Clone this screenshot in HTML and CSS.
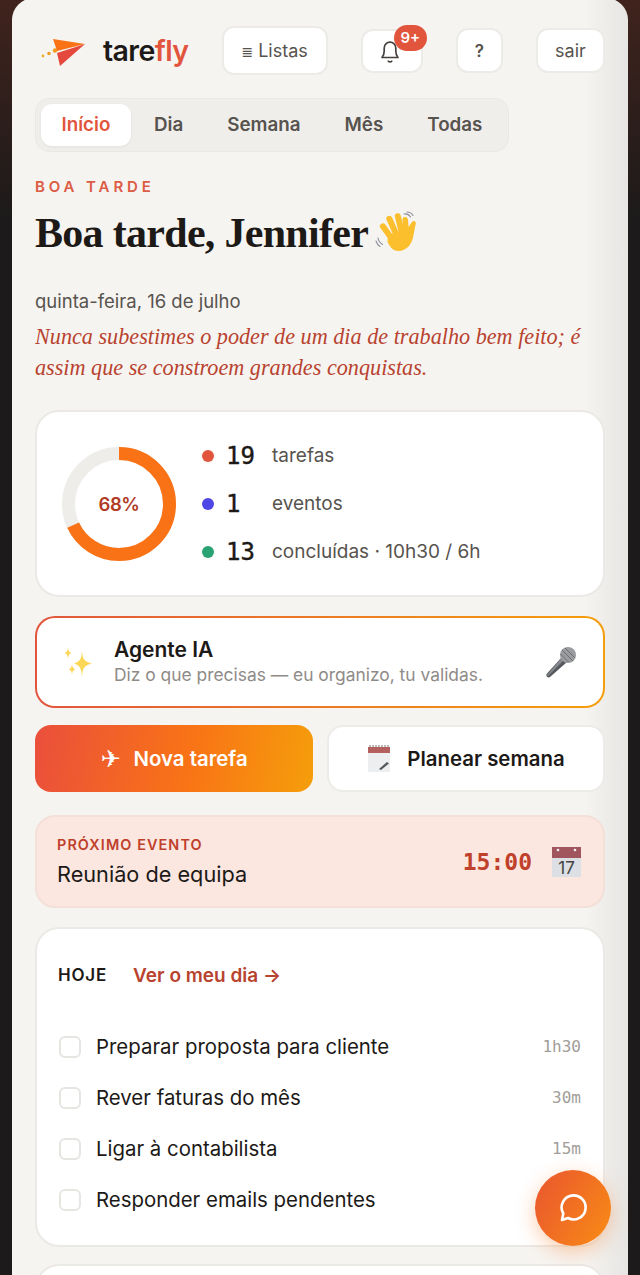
FILE: index.html
```html
<!DOCTYPE html>
<html lang="pt">
<head>
    <meta charset="UTF-8">
    <meta name="viewport" content="width=device-width, initial-scale=1.0">
    <title>tarefly</title>
    <link rel="stylesheet" href="styles.css">
</head>
<body>
    <main class="panel">
        <header class="topbar">
            <div class="brand">
                <svg class="brand-mark" viewBox="0 0 48 32" aria-hidden="true">
                    <circle cx="3" cy="21" r="1.4" fill="#eeb02f"/>
                    <circle cx="9" cy="18.5" r="1.8" fill="#ee9f2a"/>
                    <circle cx="15" cy="15.5" r="2.2" fill="#f39a1f"/>
                    <polygon points="13,4 45,9 17,16" fill="#f97316"/>
                    <polygon points="45,9 20,31 17,18" fill="#e5493d"/>
                </svg>
                <span class="brand-name">tare<em>fly</em></span>
            </div>
            <button class="top-btn top-btn-lists"><span class="lists-glyph">≣</span> Listas</button>
            <button class="top-btn top-btn-bell">
                <svg class="bell" viewBox="0 0 24 26" aria-hidden="true">
                    <path d="M4 19.5c1.6-1.6 2.2-3 2.2-6.5V10a5.8 5.8 0 0 1 11.6 0v3c0 3.500.6 4.900 2.200 6.500z" fill="none" stroke="#45413e" stroke-width="1.700" stroke-linejoin="round"/>
                    <path d="M10.300 23.200c.9 1 2.500 1 3.400 0" fill="none" stroke="#45413e" stroke-width="1.700" stroke-linecap="round"/>
                </svg>
                <span class="badge">9+</span>
            </button>
            <button class="top-btn top-btn-help">?</button>
            <button class="top-btn top-btn-out">sair</button>
        </header>

        <nav class="tabs">
            <a class="tab active">Início</a>
            <a class="tab">Dia</a>
            <a class="tab">Semana</a>
            <a class="tab">Mês</a>
            <a class="tab">Todas</a>
        </nav>

        <p class="eyebrow">BOA TARDE</p>
        <h1 class="greeting">
            Boa tarde, Jennifer
            <svg class="wave" viewBox="0 0 44 44" aria-hidden="true">
                <g fill="#fbbf2d">
                    <rect x="9" y="11" width="6" height="21" rx="3" transform="rotate(-36 12 21)"/>
                    <rect x="15" y="4" width="6" height="24" rx="3" transform="rotate(-24 18 16)"/>
                    <rect x="22" y="2" width="6" height="24" rx="3" transform="rotate(-14 25 14)"/>
                    <rect x="28" y="6" width="5.500" height="21" rx="2.700" transform="rotate(-4 31 16)"/>
                    <path d="M13 24l19-6 5-7c2-2 4.500-.5 3.700 2l-2.200 11c-1 9-7 16-15 16-6 0-9-5-11-9z"/>
                </g>
                <path d="M29 3c3-.5 5 .5 6.500 3M32 1c2.500 0 4.500 1 6 3.500M3 27c.5 3 2 5 4.500 6.500M1 30c.8 2.500 2 4.200 4 5.500" fill="none" stroke="#8b8f9c" stroke-width="1.100" stroke-linecap="round"/>
            </svg>
        </h1>
        <p class="date">quinta-feira, 16 de julho</p>
        <p class="quote">Nunca subestimes o poder de um dia de trabalho bem feito; é assim que se constroem grandes conquistas.</p>

        <section class="card summary">
            <div class="donut">
                <svg viewBox="0 0 114 114" aria-hidden="true">
                    <circle cx="57" cy="57" r="50.500" fill="none" stroke="#efede9" stroke-width="13"/>
                    <circle cx="57" cy="57" r="50.500" fill="none" stroke="#f97316" stroke-width="13" stroke-dasharray="215.800 317.300" transform="rotate(-90 57 57)"/>
                </svg>
                <span class="donut-label">68%</span>
            </div>
            <ul class="stats">
                <li class="stat"><i class="dot dot-red"></i><b class="stat-num">19</b><span>tarefas</span></li>
                <li class="stat"><i class="dot dot-blue"></i><b class="stat-num">1</b><span>eventos</span></li>
                <li class="stat"><i class="dot dot-green"></i><b class="stat-num">13</b><span>concluídas · 10h30 / 6h</span></li>
            </ul>
        </section>

        <section class="agent">
            <svg class="sparkles" viewBox="0 0 30 34" aria-hidden="true">
                <path d="M19 6c.6 8 2 10.500 10 12.500-8 2-9.400 4.500-10 13.500-.6-9-2-11.500-8-13.500 6-2 7.400-4.500 8-12.500z" fill="#fcd757"/>
                <path d="M5 2c.3 3.500 1 5 3.500 6-2.500 1-3.200 2.500-3.500 6-.3-3.500-1-5-3.500-6 2.500-1 3.200-2.500 3.500-6z" fill="#fcd757"/>
                <path d="M9 19c.3 3 1 4.300 3.300 5.300C10 25.300 9.300 26.600 9 30c-.3-3.400-1-4.700-3.300-5.700C8 23.300 8.700 22 9 19z" fill="#fcd757"/>
            </svg>
            <div class="agent-text">
                <strong>Agente IA</strong>
                <span>Diz o que precisas — eu organizo, tu validas.</span>
            </div>
            <svg class="mic" viewBox="0 0 32 32" aria-hidden="true">
                <path d="M17 11l5 5L5 31c-1 .8-2.300.5-3-.3s-1-2-.2-3z" fill="#55585c"/>
                <path d="M17 11l2.500 2.500L3 30c-.6-.4-1-.8-1-.8z" fill="#85888c"/>
                <circle cx="23" cy="9" r="8" fill="#9a9c9f"/>
                <path d="M17 4l11 11M20 2l10 10M15.500 8l8 8" stroke="#6d6f72" stroke-width="1"/>
            </svg>
        </section>

        <div class="actions">
            <button class="action action-main"><span class="plane">✈</span> Nova tarefa</button>
            <button class="action action-plan">
                <svg class="notepad" viewBox="0 0 24 28" aria-hidden="true">
                    <rect x="1" y="2" width="22" height="25" fill="#eceef0"/>
                    <rect x="1" y="2" width="22" height="6" fill="#b3605f"/>
                    <path d="M3 2V0M6 2V0M9 2V0M12 2V0M15 2V0M18 2V0M21 2V0" stroke="#777" stroke-width="1"/>
                    <path d="M12 24l8-7 2 1.500-8 6.500z" fill="#55585c"/>
                </svg>
                Planear semana
            </button>
        </div>

        <section class="event">
            <div class="event-text">
                <span class="event-kicker">PRÓXIMO EVENTO</span>
                <span class="event-name">Reunião de equipa</span>
            </div>
            <span class="event-time">15:00</span>
            <svg class="calendar" viewBox="0 0 30 30" aria-hidden="true">
                <rect x="1" y="0" width="29" height="30" fill="#dcdfe3"/>
                <rect x="1" y="0" width="29" height="11" fill="#a1565e"/>
                <circle cx="7" cy="3" r="1.300" fill="#f2f2f2"/>
                <circle cx="24" cy="3" r="1.300" fill="#f2f2f2"/>
                <text x="15.500" y="27" class="calendar-day">17</text>
            </svg>
        </section>

        <section class="card today">
            <div class="today-head">
                <span class="today-title">HOJE</span>
                <a class="today-link">Ver o meu dia →</a>
            </div>
            <ul class="tasks">
                <li class="task"><i class="check"></i><span class="task-name">Preparar proposta para cliente</span><span class="task-time">1h30</span></li>
                <li class="task"><i class="check"></i><span class="task-name">Rever faturas do mês</span><span class="task-time">30m</span></li>
                <li class="task"><i class="check"></i><span class="task-name">Ligar à contabilista</span><span class="task-time">15m</span></li>
                <li class="task"><i class="check"></i><span class="task-name">Responder emails pendentes</span></li>
            </ul>
        </section>

        <section class="card next-card"></section>
    </main>

    <button class="fab" aria-label="Chat">
        <svg viewBox="0 0 32 32" aria-hidden="true">
            <path d="M5 28l1.300-6.500A12 12 0 1 1 11 26z" fill="none" stroke="#fff" stroke-width="2.600" stroke-linejoin="round"/>
        </svg>
    </button>
</body>
</html>
```

FILE: styles.css
```css
* {
    box-sizing: border-box;
}
html, body {
    height: 1275px;
    overflow: hidden;
}
body {
    margin: 0;
    font-family: Inter, "Noto Sans", sans-serif;
    color: #1c1917;
    background: linear-gradient(180deg, #40231d 0, #1c1a1a 220px);
}
p, h1, ul {
    margin: 0;
    padding: 0;
}
ul {
    list-style: none;
}
button {
    font-family: inherit;
    cursor: pointer;
}
.panel {
    margin: -2px 12px 0;
    height: 1277px;
    overflow: hidden;
    padding: 28px 23px 0;
    border-radius: 22px 22px 0 0;
    background: linear-gradient(90deg, #f6f4f1 0, #f6f4f1 93%, #e6e5e3 100%);
}

/* top bar */
.topbar {
    display: flex;
    align-items: center;
    justify-content: space-between;
    height: 49px;
    padding: 0 0 0 5px;
}
.brand {
    display: flex;
    align-items: center;
    gap: 15px;
}
.brand-mark {
    width: 48px;
    height: 32px;
}
.brand-name {
    font-size: 28.500px;
    font-weight: 600;
    letter-spacing: -0.6px;
    color: #1c1917;
}
.brand-name em {
    font-style: normal;
    color: #e2553d;
}
.top-btn {
    position: relative;
    background: #fff;
    border: 2px solid #ecebe8;
    border-radius: 12px;
    font-size: 18px;
    color: #57534e;
    padding: 0;
}
.top-btn-lists {
    width: 106px;
    height: 49px;
}
.lists-glyph {
    font-family: "DejaVu Sans", sans-serif;
    font-size: 14px;
}
.top-btn-bell {
    width: 62px;
    height: 44px;
    display: flex;
    align-items: center;
    justify-content: center;
}
.bell {
    width: 24px;
    height: 26px;
    margin-right: 3px;
}
.badge {
    position: absolute;
    top: -6px;
    left: 31px;
    width: 33px;
    height: 26px;
    border-radius: 13px;
    background: #e2553d;
    color: #fff;
    font-size: 15px;
    font-weight: 600;
    line-height: 26px;
}
.top-btn-help {
    width: 47px;
    height: 45px;
    font-size: 17px;
    font-weight: 600;
}
.top-btn-out {
    width: 69px;
    height: 45px;
}

/* tabs */
.tabs {
    display: inline-flex;
    gap: 2px;
    height: 54px;
    margin-top: 23px;
    padding: 5px;
    background: #f0eeeb;
    border: 1px solid #eae8e4;
    border-radius: 14px;
}
.tab {
    padding: 0 21px;
    font-size: 18.800px;
    font-weight: 600;
    line-height: 42px;
    color: #57534e;
    border-radius: 11px;
}
.tab.active {
    background: #fff;
    color: #e2553d;
    padding: 0 20.500px;
    box-shadow: 0 1px 3px rgba(0, 0, 0, 0.06);
}

/* greeting */
.eyebrow {
    margin-top: 17px;
    font-size: 15px;
    font-weight: 600;
    line-height: 36px;
    height: 36px;
    letter-spacing: 3.900px;
    color: #dc5c44;
}
.greeting {
    display: flex;
    align-items: center;
    gap: 7px;
    height: 50px;
    margin-top: 3px;
    font-family: "Liberation Serif", serif;
    font-size: 42px;
    font-weight: 700;
    letter-spacing: -0.7px;
    color: #1c1917;
}
.wave {
    width: 44px;
    height: 44px;
}
.date {
    margin-top: 31px;
    font-size: 18.500px;
    line-height: 24px;
    color: #57534e;
}
.quote {
    margin-top: 8px;
    font-family: "Liberation Serif", serif;
    font-style: italic;
    font-size: 22.200px;
    line-height: 31px;
    color: #b8432f;
}

/* cards */
.card {
    background: #fff;
    border: 2px solid #ebe9e6;
    border-radius: 24px;
}
.summary {
    display: flex;
    align-items: center;
    gap: 26px;
    height: 187px;
    margin-top: 27px;
    padding-left: 25px;
}
.donut {
    position: relative;
    width: 114px;
    height: 114px;
}
.donut svg {
    display: block;
    width: 114px;
    height: 114px;
}
.donut-label {
    position: absolute;
    inset: 0;
    text-align: center;
    font-size: 18.500px;
    font-weight: 600;
    line-height: 114px;
    letter-spacing: -0.5px;
    color: #b13a25;
}
.stats {
    display: flex;
    flex-direction: column;
    gap: 14px;
    font-size: 19px;
    color: #57534e;
}
.stat {
    display: flex;
    align-items: center;
    height: 34px;
}
.dot {
    width: 12px;
    height: 12px;
    border-radius: 50%;
    margin-right: 12px;
}
.dot-red { background: #e2553d; }
.dot-blue { background: #4f46e5; }
.dot-green { background: #2ba272; }
.stat-num {
    width: 46px;
    font-family: "DejaVu Sans Mono", monospace;
    font-size: 24px;
    font-weight: 400;
    -webkit-text-stroke: 0.4px #1c1917;
    color: #1c1917;
}

/* agent box */
.agent {
    display: flex;
    align-items: center;
    height: 92px;
    margin-top: 19px;
    padding: 0 26px;
    border: 2px solid transparent;
    border-radius: 20px;
    background: linear-gradient(#fff, #fff) padding-box,
        linear-gradient(90deg, #e2553d, #f59e0b) border-box;
}
.sparkles {
    width: 30px;
    height: 34px;
}
.agent-text {
    display: flex;
    flex-direction: column;
    flex: 1;
    margin-left: 21px;
}
.agent-text strong {
    font-size: 21px;
    font-weight: 600;
    line-height: 26px;
}
.agent-text span {
    font-size: 17.400px;
    line-height: 24px;
    color: #8f8b87;
}
.mic {
    width: 32px;
    height: 32px;
}

/* action buttons */
.actions {
    display: grid;
    grid-template-columns: 1fr 1fr;
    gap: 14px;
    margin-top: 17px;
}
.action {
    display: flex;
    align-items: center;
    justify-content: center;
    gap: 13px;
    height: 67px;
    padding: 0;
    font-size: 20.400px;
    font-weight: 600;
    color: #1c1917;
    background: #fff;
    border: 2px solid #ecebe8;
    border-radius: 16px;
}
.action-main {
    color: #fff;
    border: 0;
    background: linear-gradient(100deg, #ea4f3c 0, #f97316 55%, #f59e0b 100%);
}
.action-plan {
    gap: 16px;
}
.plane {
    font-family: "DejaVu Sans", sans-serif;
    font-size: 24px;
    font-weight: 400;
}
.notepad {
    width: 24px;
    height: 28px;
}

/* next event */
.event {
    display: flex;
    align-items: center;
    height: 93px;
    margin-top: 23px;
    padding: 0 22px 0 20px;
    background: #fbe7e0;
    border: 2px solid #f3e0d8;
    border-radius: 20px;
}
.event-text {
    display: flex;
    flex-direction: column;
    flex: 1;
}
.event-kicker {
    font-size: 14.400px;
    font-weight: 600;
    line-height: 24px;
    letter-spacing: 1.100px;
    color: #c0402b;
}
.event-name {
    font-size: 21.700px;
    line-height: 34px;
}
.event-time {
    font-family: "DejaVu Sans Mono", monospace;
    font-size: 23px;
    font-weight: 700;
    color: #c0402b;
}
.calendar {
    width: 30px;
    height: 30px;
    margin-left: 19px;
}
.calendar-day {
    font-family: Inter, sans-serif;
    font-size: 17px;
    fill: #444;
    text-anchor: middle;
}

/* today list */
.today {
    height: 320px;
    margin-top: 19px;
    padding: 0 22px;
}
.today-head {
    display: flex;
    align-items: center;
    gap: 26px;
    height: 92px;
}
.today-title {
    margin-left: -1px;
    font-size: 17px;
    font-weight: 600;
    letter-spacing: 0.8px;
}
.today-link {
    font-size: 19px;
    font-weight: 600;
    color: #b8432f;
}
.tasks {
    display: flex;
    flex-direction: column;
}
.task {
    display: flex;
    align-items: center;
    height: 51px;
    font-size: 20.400px;
}
.check {
    width: 22px;
    height: 22px;
    border: 2px solid #e7e5e2;
    border-radius: 6px;
    background: #fff;
}
.task-name {
    flex: 1;
    margin-left: 15px;
}
.task-time {
    font-family: "DejaVu Sans Mono", monospace;
    font-size: 16px;
    color: #a19d99;
}
.next-card {
    height: 100px;
    margin-top: 17px;
}

/* floating chat */
.fab {
    position: fixed;
    left: 535px;
    top: 1170px;
    display: flex;
    align-items: center;
    justify-content: center;
    width: 76px;
    height: 76px;
    padding: 0;
    border: 0;
    border-radius: 50%;
    background: linear-gradient(120deg, #e9552f, #f98c15);
    box-shadow: 0 6px 20px rgba(249, 115, 22, 0.35);
}
.fab svg {
    width: 32px;
    height: 32px;
}
```
